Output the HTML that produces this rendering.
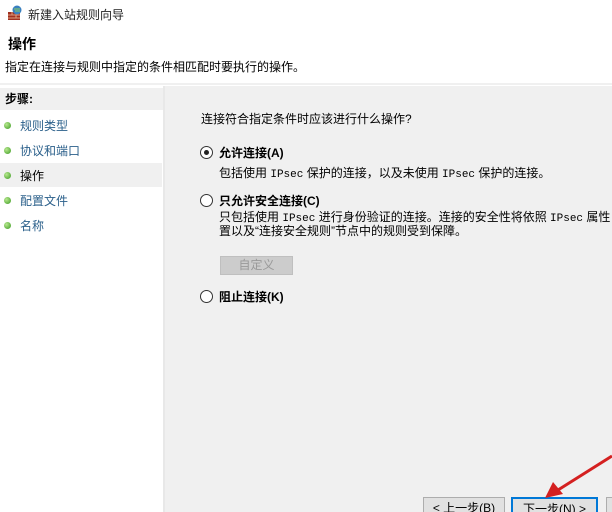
<!DOCTYPE html>
<html><head><meta charset="utf-8"><style>
*{margin:0;padding:0;box-sizing:border-box}
html,body{width:612px;height:512px;overflow:hidden}
body{background:#fff;font-family:"Liberation Sans","Noto Sans CJK SC",sans-serif;font-size:12px;color:#000;position:relative}
.a{position:absolute;white-space:nowrap}
.dot{position:absolute;width:7px;height:7px;border-radius:50%;background:radial-gradient(circle at 35% 35%,#b8e890,#3a9a20)}
.lk{color:#2a5f8a}
.rad{position:absolute;width:13px;height:13px;border:1px solid #333;border-radius:50%;background:#fff}
.btn{position:absolute;height:22px;border:1px solid #adadad;background:#e1e1e1;font-size:12px;text-align:center;line-height:20px}
</style></head><body>
<svg class="a" style="left:7px;top:5px" width="16" height="16"><rect x="1" y="7" width="12" height="8" fill="#a03020"/><path d="M1 10h12M1 13h12M5 7v3M9 10v3" stroke="#e0a080" stroke-width="1"/><circle cx="10" cy="5" r="4.5" fill="#3a80c0"/><path d="M7 4h6M8 6h5" stroke="#8fd060"/></svg>
<div class="a" style="left:28px;top:6px;font-size:12px;color:#222">新建入站规则向导</div>
<div class="a" style="left:8px;top:34px;font-size:14px;font-weight:bold">操作</div>
<div class="a" style="left:5px;top:58px">指定在连接与规则中指定的条件相匹配时要执行的操作。</div>
<div class="a" style="left:0;top:83px;width:612px;height:2px;background:#f0f0f0"></div>
<div class="a" style="left:0;top:88px;width:163px;height:22px;background:#f0f0f0"></div>
<div class="a" style="left:5px;top:90px;font-weight:bold">步骤:</div>
<div class="dot" style="left:4px;top:122px"></div><div class="a lk" style="left:20px;top:117px">规则类型</div>
<div class="dot" style="left:4px;top:147px"></div><div class="a lk" style="left:20px;top:142px">协议和端口</div>
<div class="a" style="left:0;top:163px;width:162px;height:24px;background:#f0f0f0"></div>
<div class="dot" style="left:4px;top:172px"></div><div class="a" style="left:20px;top:167px">操作</div>
<div class="dot" style="left:4px;top:197px"></div><div class="a lk" style="left:20px;top:192px">配置文件</div>
<div class="dot" style="left:4px;top:222px"></div><div class="a lk" style="left:20px;top:217px">名称</div>
<div class="a" style="left:163px;top:86px;width:2px;height:426px;background:#e8e8e8"></div>
<div class="a" style="left:165px;top:86px;width:447px;height:426px;background:#f0f0f0"></div>
<div class="a" style="left:201px;top:110px">连接符合指定条件时应该进行什么操作?</div>
<div class="rad" style="left:200px;top:146px"><div style="position:absolute;left:3px;top:3px;width:5px;height:5px;border-radius:50%;background:#222"></div></div>
<div class="a" style="left:219px;top:144px;font-weight:bold">允许连接(A)</div>
<div class="a" style="left:219px;top:164px">包括使用 <span style="font-family:'Liberation Mono',monospace;font-size:11px">IPsec</span> 保护的连接，以及未使用 <span style="font-family:'Liberation Mono',monospace;font-size:11px">IPsec</span> 保护的连接。</div>
<div class="rad" style="left:200px;top:194px"></div>
<div class="a" style="left:219px;top:192px;font-weight:bold">只允许安全连接(C)</div>
<div class="a" style="left:219px;top:211px;line-height:12px">只包括使用 <span style="font-family:'Liberation Mono',monospace;font-size:11px">IPsec</span> 进行身份验证的连接。连接的安全性将依照 <span style="font-family:'Liberation Mono',monospace;font-size:11px">IPsec</span> 属性<br>置以及“连接安全规则”节点中的规则受到保障。</div>
<div class="a" style="left:220px;top:256px;width:73px;height:19px;background:#ccc;border:1px solid #bfbfbf;color:#999;text-align:center;line-height:17px">自定义</div>
<div class="rad" style="left:200px;top:290px"></div>
<div class="a" style="left:219px;top:288px;font-weight:bold">阻止连接(K)</div>
<div class="btn" style="left:423px;top:497px;width:82px">&lt; 上一步(B)</div>
<div class="btn" style="left:511px;top:497px;width:87px;border:2px solid #0078d7">下一步(N) &gt;</div>
<div class="btn" style="left:606px;top:497px;width:20px"></div>
<svg class="a" style="left:0;top:0" width="612" height="512"><line x1="612" y1="456" x2="558" y2="490" stroke="#d42020" stroke-width="3"/><polygon points="545,498 553,482 563,494" fill="#d42020"/></svg>
</body></html>
